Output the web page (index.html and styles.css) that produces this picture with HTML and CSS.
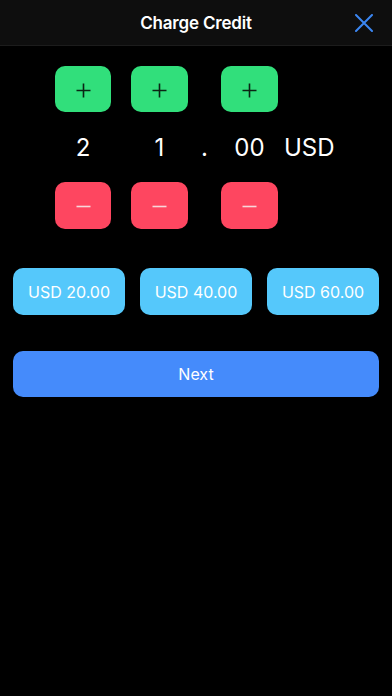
FILE: index.html
```html
<!DOCTYPE html>
<html>
<head>
  <title>Charge Credit</title>
  <link rel="stylesheet" href="styles.css">
</head>
<body>
  <div class="header">
    <span class="title">Charge Credit</span>
    <span class="close-button">
      <svg width="18" height="18" viewBox="0 0 18 18">
        <path d="M1 1 L17 17 M17 1 L1 17" stroke="#3b86f2" stroke-width="2" stroke-linecap="round" fill="none"/>
      </svg>
    </span>
  </div>

  <div class="amount">
    <button class="step plus c1"><svg width="15" height="15" viewBox="0 0 15 15"><path d="M7.5 0.5 V14.5 M0.5 7.5 H14.5" /></svg></button>
    <button class="step plus c2"><svg width="15" height="15" viewBox="0 0 15 15"><path d="M7.5 0.5 V14.5 M0.5 7.5 H14.5" /></svg></button>
    <button class="step plus c3"><svg width="15" height="15" viewBox="0 0 15 15"><path d="M7.5 0.5 V14.5 M0.5 7.5 H14.5" /></svg></button>

    <span class="digit c1">2</span>
    <span class="digit c2">1</span>
    <span class="digit cdot">.</span>
    <span class="digit c3">00</span>
    <span class="digit ccur">USD</span>

    <button class="step minus c1"><svg width="15" height="15" viewBox="0 0 15 15"><path d="M0.5 7.5 H14.5" /></svg></button>
    <button class="step minus c2"><svg width="15" height="15" viewBox="0 0 15 15"><path d="M0.5 7.5 H14.5" /></svg></button>
    <button class="step minus c3"><svg width="15" height="15" viewBox="0 0 15 15"><path d="M0.5 7.5 H14.5" /></svg></button>
  </div>

  <div class="presets">
    <button class="preset">USD 20.00</button>
    <button class="preset">USD 40.00</button>
    <button class="preset">USD 60.00</button>
  </div>

  <div class="actions">
    <button class="next-button">Next</button>
  </div>
</body>
</html>
```

FILE: styles.css
```css
body {
  font-family: Inter, "Noto Sans", sans-serif;
  background-color: black;
  color: white;
  margin: 0;
  padding: 0;
}

button {
  font-family: inherit;
  border: none;
  cursor: pointer;
}

/* header */
.header {
  height: 45px;
  background-color: #0e0e0e;
  border-bottom: 1px solid #1c1c1c;
  display: flex;
  align-items: center;
  justify-content: center;
  position: relative;
}

.title {
  font-size: 17px;
  font-weight: 600;
  letter-spacing: -0.2px;
}

.close-button {
  position: absolute;
  right: 19px;
  top: 14px;
  width: 18px;
  height: 18px;
}

/* amount picker */
.amount {
  display: grid;
  grid-template-columns: 56px 20px 57px 33px 57px 6px auto;
  grid-template-rows: 46px 70px 47px;
  margin: 20px 0 0 55px;
  align-items: center;
}

.c1 { grid-column: 1; }
.c2 { grid-column: 3; }
.cdot { grid-column: 4; }
.c3 { grid-column: 5; }
.ccur { grid-column: 7; }

.step {
  height: 100%;
  width: 100%;
  border-radius: 10px;
  padding: 2px 0 0 0;
  display: flex;
  align-items: center;
  justify-content: center;
}

.step svg path {
  fill: none;
  stroke-width: 1.6;
}

.plus {
  grid-row: 1;
  background-color: #31df7b;
}

.plus svg path {
  stroke: #0b2414;
}

.minus {
  grid-row: 3;
  background-color: #fe4660;
}

.minus svg path {
  stroke: #f8d6da;
}

.digit {
  grid-row: 2;
  text-align: center;
  font-size: 24px;
  font-weight: 400;
}

.ccur {
  text-align: left;
}

/* preset amounts */
.presets {
  display: flex;
  gap: 15px;
  padding: 0 13px;
  margin-top: 39px;
}

.preset {
  flex: 1;
  height: 47px;
  border-radius: 10px;
  background-color: #55c8fb;
  color: white;
  font-size: 16px;
}

/* next */
.actions {
  padding: 0 13px;
  margin-top: 36px;
}

.next-button {
  width: 100%;
  height: 46px;
  border-radius: 10px;
  background-color: #458bfb;
  color: white;
  font-size: 16px;
}
```
